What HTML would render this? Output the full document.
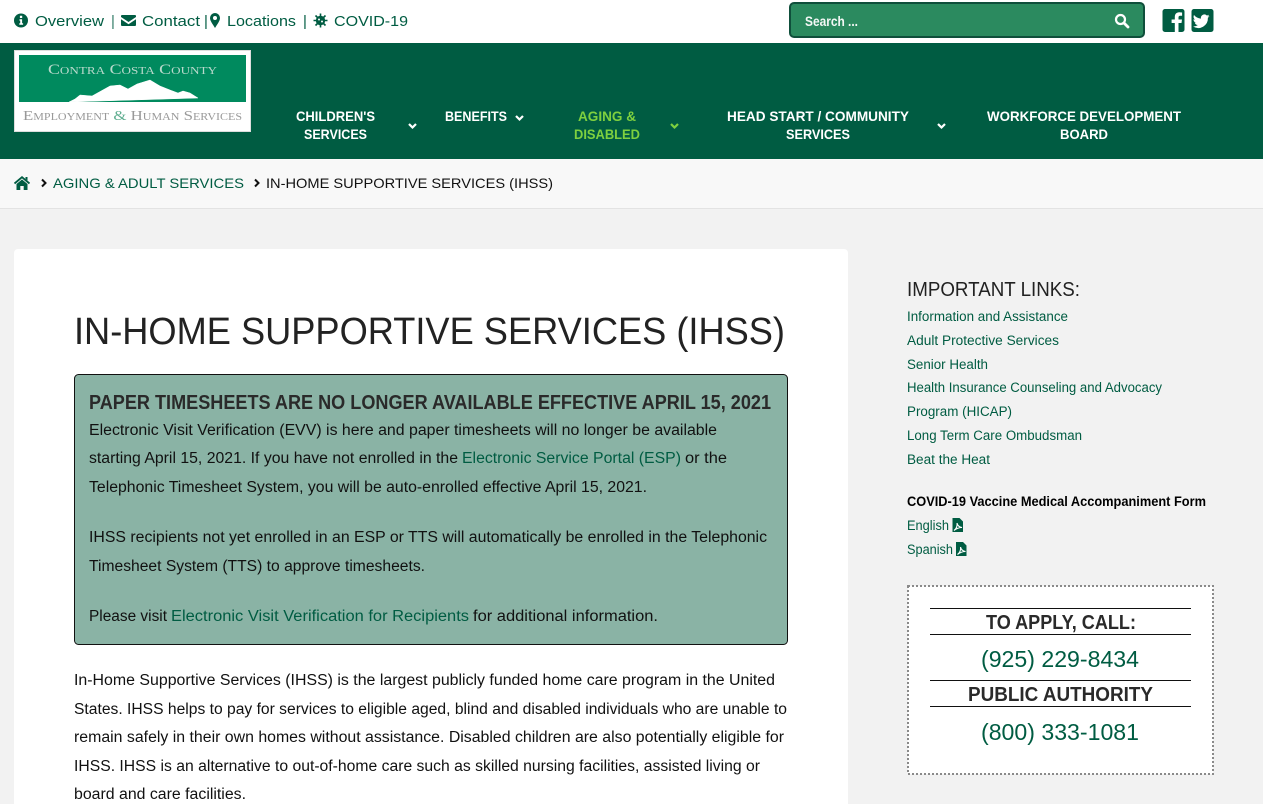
<!DOCTYPE html>
<html lang="en"><head><meta charset="utf-8"><title>In-Home Supportive Services (IHSS)</title>
<style>
html,body{margin:0;padding:0;background:#f2f2f2;overflow:hidden}
svg{display:block}
text{font-family:"Liberation Sans",sans-serif}
.t{font-size:15px;fill:#005c42}
.n{font-size:14px;font-weight:700;fill:#fff}
.b{font-size:15.5px;fill:#111}
.a{font-size:15.5px;fill:#005c42}
.l{font-size:13.5px;fill:#005c42}
.h{font-size:20px;font-weight:700;fill:#2a2a2a}
.p{font-size:23px;fill:#005c42}
</style></head><body>
<svg xmlns="http://www.w3.org/2000/svg" width="1263" height="804" viewBox="0 0 1263 804">
<rect width="1263" height="804" fill="#f2f2f2"/>
<rect width="1263" height="43" fill="#fff"/>
<rect y="43" width="1263" height="116" fill="#005c42"/>
<rect y="159" width="1263" height="49" fill="#f8f8f8"/>
<rect y="208" width="1263" height="1" fill="#e3e3e3"/>
<!-- top links -->
<circle cx="21" cy="20.500" r="7" fill="#005c42"/><path d="M19.500 19.300h2.600v4h1v1.400h-3.800v-1.400h.9v-2.600h-.7zM19.900 15.700h2.300v2.300h-2.300z" fill="#fff"/>
<text class="t" x="35" y="26" textLength="69" lengthAdjust="spacingAndGlyphs">Overview</text>
<text class="t" x="111" y="26" fill-opacity=".8">|</text>
<path d="M121 16a1 1 0 0 1 1-1h13a1 1 0 0 1 1 1v1l-7.500 5-7.500-5zM121 19.200l7.500 5 7.500-5V25a1 1 0 0 1-1 1h-13a1 1 0 0 1-1-1z" fill="#005c42"/>
<text class="t" x="142" y="26" textLength="58" lengthAdjust="spacingAndGlyphs">Contact</text>
<text class="t" x="204" y="26">|</text>
<path fill-rule="evenodd" d="M215 13a5 5 0 0 1 5 5c0 3-3 6.500-5 10-2-3.500-5-7-5-10a5 5 0 0 1 5-5zm0 3a2 2 0 1 0 0 4 2 2 0 0 0 0-4z" fill="#005c42"/>
<text class="t" x="227" y="26" textLength="69" lengthAdjust="spacingAndGlyphs">Locations</text>
<text class="t" x="303" y="26">|</text>
<circle cx="320.500" cy="20.500" r="4.700" fill="#005c42"/>
<path d="M320.500 13.500v14M313.500 20.500h14M315.500 15.500l10 10M325.500 15.500l-10 10" stroke="#005c42" stroke-width="1.600"/>
<circle cx="319" cy="19.500" r="1" fill="#fff"/><circle cx="322" cy="21.500" r="1" fill="#fff"/>
<text class="t" x="334" y="26" textLength="74" lengthAdjust="spacingAndGlyphs">COVID-19</text>
<!-- search -->
<rect x="790" y="3" width="354" height="34" rx="4" fill="#2b8a5f" stroke="#0f4f3b" stroke-width="2"/>
<text x="805" y="26" font-size="13.500" font-weight="700" fill="#f4f8f6" textLength="53" lengthAdjust="spacingAndGlyphs">Search ...</text>
<circle cx="1120.500" cy="19.500" r="4.500" fill="none" stroke="#fff" stroke-width="2.200"/>
<path d="M1124 23l4 4" stroke="#fff" stroke-width="2.800" stroke-linecap="round"/>
<!-- social -->
<path d="M1165.500 9h16.500a2.500 2.500 0 0 1 2.500 2.500v18a2.500 2.500 0 0 1-2.500 2.500h-3.500v-9h3l.5-3.500h-3.500V17.500c0-1.200.5-1.800 1.800-1.800h1.800v-3.200c-1-.1-2-.2-2.800-.2-2.800 0-4.500 1.700-4.500 4.700v2.500h-3.200V23h3.200v9h-9.800a2.500 2.500 0 0 1-2.500-2.500v-18a2.500 2.500 0 0 1 2.500-2.500z" fill="#005c42"/>
<rect x="1191.500" y="9" width="22" height="23" rx="2.500" fill="#005c42"/>
<path d="M1209.500 16a6.500 6.500 0 0 1-2 .6 3.500 3.500 0 0 0 1.500-1.900 7 7 0 0 1-2.200.8 3.400 3.400 0 0 0-5.800 3.100 9.700 9.700 0 0 1-7-3.600 3.400 3.400 0 0 0 1 4.600 3.400 3.400 0 0 1-1.500-.4 3.400 3.400 0 0 0 2.700 3.400 3.400 3.400 0 0 1-1.500 0 3.400 3.400 0 0 0 3.200 2.400 6.900 6.900 0 0 1-5 1.400 9.700 9.700 0 0 0 15-8.600 6.800 6.800 0 0 0 1.600-1.800z" fill="#fff"/>
<!-- logo -->
<rect x="14.500" y="50.500" width="236" height="81" fill="#fff" stroke="#ddd"/>
<rect x="19" y="55" width="227" height="47" fill="#008a5e"/>
<path d="M69 102l6-3 5-4 12 1 9-5 9-5 10-1 8 4 9-5 13-4 10 6 10 4 8 3 5-2 7 2 8 5z" fill="#fff" stroke="#fff" stroke-width=".5"/>
<text x="48" y="74" font-size="15" fill="#b9d9cc" textLength="169" lengthAdjust="spacingAndGlyphs" style="font-family:'Liberation Serif',serif;font-variant:small-caps">Contra Costa County</text>
<text x="23" y="120" font-size="14" fill="#999" textLength="219" lengthAdjust="spacingAndGlyphs" style="font-family:'Liberation Serif',serif;font-variant:small-caps">Employment <tspan fill="#5fae90">&amp;</tspan> Human Services</text>
<!-- nav -->
<text class="n" x="296" y="121" textLength="79" lengthAdjust="spacingAndGlyphs">CHILDREN'S</text>
<text class="n" x="304" y="139" textLength="63" lengthAdjust="spacingAndGlyphs">SERVICES</text>
<path d="M409 124l3.500 3.500 3.500-3.500" fill="none" stroke="#fff" stroke-width="2.200"/>
<text class="n" x="445" y="121" textLength="62" lengthAdjust="spacingAndGlyphs">BENEFITS</text>
<path d="M516 116l3.500 3.500 3.500-3.500" fill="none" stroke="#fff" stroke-width="2.200"/>
<text class="n" x="578" y="121" textLength="58" lengthAdjust="spacingAndGlyphs" style="fill:#7ed03f">AGING &amp;</text>
<text class="n" x="574" y="139" textLength="66" lengthAdjust="spacingAndGlyphs" style="fill:#7ed03f">DISABLED</text>
<path d="M671 124l3.500 3.500 3.500-3.500" fill="none" stroke="#7ed03f" stroke-width="2.200"/>
<text class="n" x="727" y="121" textLength="182" lengthAdjust="spacingAndGlyphs">HEAD START / COMMUNITY</text>
<text class="n" x="786" y="139" textLength="64" lengthAdjust="spacingAndGlyphs">SERVICES</text>
<path d="M938 124l3.500 3.500 3.500-3.500" fill="none" stroke="#fff" stroke-width="2.200"/>
<text class="n" x="987" y="121" textLength="194" lengthAdjust="spacingAndGlyphs">WORKFORCE DEVELOPMENT</text>
<text class="n" x="1060" y="139" textLength="48" lengthAdjust="spacingAndGlyphs">BOARD</text>
<!-- breadcrumb -->
<path d="M14.500 183.500l7.500-6.300 7.500 6.300" fill="none" stroke="#005c42" stroke-width="1.800"/>
<path d="M22 179.500l-5.500 4.500V190h3.800v-4h3.400v4h3.800v-6zM25.500 177h2v3.500l-2-1.500z" fill="#005c42"/>
<path d="M42 179.500l3.500 3.500-3.500 3.500" fill="none" stroke="#111" stroke-width="2"/>
<text x="53" y="188" font-size="14" fill="#005c42" textLength="191" lengthAdjust="spacingAndGlyphs">AGING &amp; ADULT SERVICES</text>
<path d="M255 179.500l3.500 3.500-3.500 3.500" fill="none" stroke="#111" stroke-width="2"/>
<text x="266" y="188" font-size="14" fill="#111" textLength="287" lengthAdjust="spacingAndGlyphs">IN-HOME SUPPORTIVE SERVICES (IHSS)</text>
<!-- card -->
<rect x="14" y="249" width="834" height="570" rx="4" fill="#000" fill-opacity=".04" transform="translate(0 1)"/>
<rect x="14" y="249" width="834" height="570" rx="4" fill="#fff"/>
<text x="74" y="344" font-size="38" fill="#222" textLength="711" lengthAdjust="spacingAndGlyphs">IN-HOME SUPPORTIVE SERVICES (IHSS)</text>
<rect x="74.500" y="374.500" width="713" height="270" rx="4" fill="#8ab3a5" stroke="#111"/>
<text class="h" x="89" y="409" textLength="682" lengthAdjust="spacingAndGlyphs">PAPER TIMESHEETS ARE NO LONGER AVAILABLE EFFECTIVE APRIL 15, 2021</text>
<text class="b" x="89" y="435" textLength="628" lengthAdjust="spacingAndGlyphs">Electronic Visit Verification (EVV) is here and paper timesheets will no longer be available</text>
<text class="b" x="89" y="463" textLength="369" lengthAdjust="spacingAndGlyphs">starting April 15, 2021. If you have not enrolled in the</text>
<text class="a" x="462" y="463" textLength="219" lengthAdjust="spacingAndGlyphs">Electronic Service Portal (ESP)</text>
<text class="b" x="685" y="463" textLength="42" lengthAdjust="spacingAndGlyphs">or the</text>
<text class="b" x="89" y="492" textLength="558" lengthAdjust="spacingAndGlyphs">Telephonic Timesheet System, you will be auto-enrolled effective April 15, 2021.</text>
<text class="b" x="89" y="542" textLength="678" lengthAdjust="spacingAndGlyphs">IHSS recipients not yet enrolled in an ESP or TTS will automatically be enrolled in the Telephonic</text>
<text class="b" x="89" y="571" textLength="336" lengthAdjust="spacingAndGlyphs">Timesheet System (TTS) to approve timesheets.</text>
<text class="b" x="89" y="621" textLength="78" lengthAdjust="spacingAndGlyphs">Please visit</text>
<text class="a" x="171" y="621" textLength="298" lengthAdjust="spacingAndGlyphs">Electronic Visit Verification for Recipients</text>
<text class="b" x="473" y="621" textLength="185" lengthAdjust="spacingAndGlyphs">for additional information.</text>
<text class="b" x="74" y="685" textLength="701" lengthAdjust="spacingAndGlyphs">In-Home Supportive Services (IHSS) is the largest publicly funded home care program in the United</text>
<text class="b" x="74" y="714" textLength="713" lengthAdjust="spacingAndGlyphs">States. IHSS helps to pay for services to eligible aged, blind and disabled individuals who are unable to</text>
<text class="b" x="74" y="742" textLength="710" lengthAdjust="spacingAndGlyphs">remain safely in their own homes without assistance. Disabled children are also potentially eligible for</text>
<text class="b" x="74" y="771" textLength="686" lengthAdjust="spacingAndGlyphs">IHSS. IHSS is an alternative to out-of-home care such as skilled nursing facilities, assisted living or</text>
<text class="b" x="74" y="799" textLength="172" lengthAdjust="spacingAndGlyphs">board and care facilities.</text>
<!-- sidebar -->
<text x="907" y="296" font-size="20" fill="#222" textLength="173" lengthAdjust="spacingAndGlyphs">IMPORTANT LINKS:</text>
<text class="l" x="907" y="321" textLength="161" lengthAdjust="spacingAndGlyphs">Information and Assistance</text>
<text class="l" x="907" y="345" textLength="152" lengthAdjust="spacingAndGlyphs">Adult Protective Services</text>
<text class="l" x="907" y="369" textLength="81" lengthAdjust="spacingAndGlyphs">Senior Health</text>
<text class="l" x="907" y="392" textLength="255" lengthAdjust="spacingAndGlyphs">Health Insurance Counseling and Advocacy</text>
<text class="l" x="907" y="416" textLength="105" lengthAdjust="spacingAndGlyphs">Program (HICAP)</text>
<text class="l" x="907" y="440" textLength="175" lengthAdjust="spacingAndGlyphs">Long Term Care Ombudsman</text>
<text class="l" x="907" y="464" textLength="83" lengthAdjust="spacingAndGlyphs">Beat the Heat</text>
<text x="907" y="506" font-size="13.500" font-weight="700" fill="#000" textLength="299" lengthAdjust="spacingAndGlyphs">COVID-19 Vaccine Medical Accompaniment Form</text>
<text class="l" x="907" y="530" textLength="42" lengthAdjust="spacingAndGlyphs">English</text>
<path d="M952.500 518h7l3.500 3.500V532h-10.500z" fill="#005c42"/><path d="M954 530.500c2.500-1.500 3.500-5 3-7.500 .5 2.500 2 4 5 4.500-3 0-5.500 1-8 3z" fill="none" stroke="#fff" stroke-width="1.100"/>
<text class="l" x="907" y="554" textLength="46" lengthAdjust="spacingAndGlyphs">Spanish</text>
<path d="M956 542h7l3.500 3.500V556H956z" fill="#005c42"/><path d="M957.500 554.500c2.500-1.500 3.500-5 3-7.500 .5 2.500 2 4 5 4.500-3 0-5.500 1-8 3z" fill="none" stroke="#fff" stroke-width="1.100"/>
<!-- call box -->
<rect x="908" y="586" width="305" height="188" fill="#fff"/>
<rect x="908" y="586" width="305" height="188" fill="none" stroke="#8a8a8a" stroke-width="2" stroke-dasharray="2 2"/>
<path d="M930 608.500h261M930 634.500h261M930 680.500h261M930 706.500h261" stroke="#111" stroke-width="1"/>
<text class="h" x="986" y="629" textLength="150" lengthAdjust="spacingAndGlyphs">TO APPLY, CALL:</text>
<text class="p" x="981" y="667" textLength="158" lengthAdjust="spacingAndGlyphs">(925) 229-8434</text>
<text class="h" x="968" y="701" textLength="185" lengthAdjust="spacingAndGlyphs">PUBLIC AUTHORITY</text>
<text class="p" x="981" y="740" textLength="158" lengthAdjust="spacingAndGlyphs">(800) 333-1081</text>
</svg>
</body></html>
